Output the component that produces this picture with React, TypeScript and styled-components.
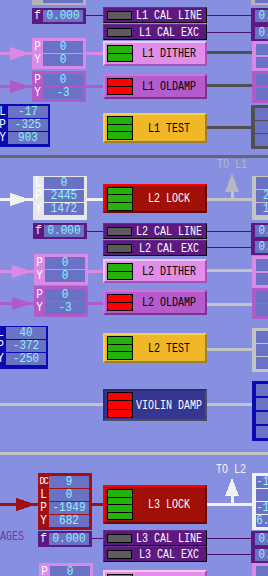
import React from "react";
import styled, { createGlobalStyle } from "styled-components";

const GlobalStyle = createGlobalStyle`
  html, body {
    margin: 0;
    padding: 0;
    background: #8790e0;
  }
  body {
    width: 268px;
    height: 576px;
    overflow: hidden;
    font-family: "Liberation Mono", "DejaVu Sans Mono", monospace;
  }
`;

const Screen = styled.div`
  width: 268px;
  height: 576px;
  overflow: hidden;
  background: #8790e0;
  display: flex;
  flex-direction: column;
`;

const Section = styled.section<{ $h: number }>`
  position: relative;
  height: ${(p) => p.$h}px;
  flex-shrink: 0;
  display: grid;
  grid-template-columns: 103px 104px 1fr;
`;

const Column = styled.div`
  position: relative;
  z-index: 1;
  display: flex;
  flex-direction: column;
  align-items: flex-start;
  min-width: 0;
`;

const Separator = styled.div<{ $c: string }>`
  height: 3px;
  flex-shrink: 0;
  background: ${(p) => p.$c};
`;

/* ---------- readback boxes ---------- */

const BoxFrame = styled.div<{ $mt: number; $ml: number; $w: number; $bg: string; $pad: string; $label: number; $gap: number }>`
  margin-top: ${(p) => p.$mt}px;
  margin-left: ${(p) => p.$ml}px;
  width: ${(p) => p.$w}px;
  flex-shrink: 0;
  box-sizing: border-box;
  padding: ${(p) => p.$pad};
  background: ${(p) => p.$bg};
  display: grid;
  grid-template-columns: ${(p) => p.$label}px 1fr;
  row-gap: ${(p) => p.$gap}px;
`;

const BoxLabel = styled.span<{ $c: string; $h: number; $tight?: boolean }>`
  height: ${(p) => p.$h}px;
  line-height: ${(p) => p.$h}px;
  color: ${(p) => p.$c};
  font-size: ${(p) => (p.$tight ? 9 : 11)}px;
  letter-spacing: ${(p) => (p.$tight ? -1.5 : 0)}px;
  text-align: center;
  transform: scaleY(1.15);
  white-space: nowrap;
`;

const Field = styled.div<{ $h: number }>`
  height: ${(p) => p.$h}px;
  line-height: ${(p) => p.$h}px;
  background: #6a72c6;
  color: #8ef4f4;
  font-size: 11px;
  text-align: center;
  overflow: hidden;
  white-space: nowrap;
  span {
    display: inline-block;
    transform: scaleY(1.15);
  }
`;

type Row = { label?: string; value?: string };

type BoxSpec = {
  mt: number;
  ml: number;
  w?: number;
  bg: string;
  rows: Row[];
  labelW?: number;
  rowH?: number;
  gap?: number;
  pad?: string;
  labelColor?: string;
};

function ReadBox({ mt, ml, w = 54, bg, rows, labelW = 11, rowH = 12, gap = 1, pad = "3px 3px 3px 0", labelColor = "#ffffff" }: BoxSpec) {
  return (
    <BoxFrame $mt={mt} $ml={ml} $w={w} $bg={bg} $pad={pad} $label={labelW} $gap={gap}>
      {rows.map((r, i) => (
        <React.Fragment key={i}>
          <BoxLabel $c={labelColor} $h={rowH} $tight={(r.label || "").length > 1}>
            {r.label}
          </BoxLabel>
          <Field $h={rowH}>
            <span>{r.value}</span>
          </Field>
        </React.Fragment>
      ))}
    </BoxFrame>
  );
}

/* ---------- buttons with lamps ---------- */

const BtnFrame = styled.div<{ $mt: number; $h: number; $bg: string; $hi: string; $lo: string; $fg: string; $bw: number }>`
  margin-top: ${(p) => p.$mt}px;
  width: 104px;
  height: ${(p) => p.$h}px;
  flex-shrink: 0;
  box-sizing: border-box;
  background: ${(p) => p.$bg};
  border-style: solid;
  border-width: ${(p) => p.$bw}px;
  border-color: ${(p) => `${p.$hi} ${p.$lo} ${p.$lo} ${p.$hi}`};
  color: ${(p) => p.$fg};
  display: flex;
  align-items: center;
  padding-left: ${(p) => 4 - p.$bw}px;
`;

const Lamp = styled.div<{ $w: number; $h: number }>`
  width: ${(p) => p.$w}px;
  height: ${(p) => p.$h}px;
  box-sizing: border-box;
  border: 1px solid #000;
  background: #000;
  display: flex;
  flex-direction: column;
  gap: 1px;
  flex-shrink: 0;
`;

const Segment = styled.div<{ $c: string }>`
  flex: 1;
  background: ${(p) => p.$c};
`;

const BtnText = styled.span`
  flex: 1;
  text-align: center;
  font-size: 10px;
  white-space: nowrap;
  transform: scaleY(1.3);
`;

type Look = { bg: string; hi: string; lo: string; fg: string; bw?: number };

const looks: Record<string, Look> = {
  cal: { bg: "#5c1a80", hi: "#6e2a92", lo: "#000000", fg: "#ffffff", bw: 1 },
  dither: { bg: "#e08ee9", hi: "#f6c6f8", lo: "#a452b6", fg: "#000000" },
  oldamp: { bg: "#b45ccb", hi: "#c878dc", lo: "#7c3290", fg: "#000000" },
  test: { bg: "#f0b828", hi: "#f8d04a", lo: "#98803a", fg: "#000000" },
  lock: { bg: "#a01008", hi: "#ff0000", lo: "#6a0804", fg: "#ffffff" },
  violin: { bg: "#363690", hi: "#2c2c78", lo: "#4c4c64", fg: "#ffffff" },
};

type BtnSpec = {
  mt: number;
  h: number;
  look: string;
  text: string;
  lamp: { w: number; h: number; c: string; n: number };
};

function Button({ mt, h, look, text, lamp }: BtnSpec) {
  const l = looks[look];
  return (
    <BtnFrame $mt={mt} $h={h} $bg={l.bg} $hi={l.hi} $lo={l.lo} $fg={l.fg} $bw={l.bw ?? 2}>
      <Lamp $w={lamp.w} $h={lamp.h}>
        {Array.from({ length: lamp.n }).map((_, i) => (
          <Segment key={i} $c={lamp.c} />
        ))}
      </Lamp>
      <BtnText>{text}</BtnText>
    </BtnFrame>
  );
}

/* ---------- connectors drawn over the canvas ---------- */

const Wire = styled.div<{ $x: number; $y: number; $w: number; $h: number; $c: string }>`
  position: absolute;
  left: ${(p) => p.$x}px;
  top: ${(p) => p.$y}px;
  width: ${(p) => p.$w}px;
  height: ${(p) => p.$h}px;
  background: ${(p) => p.$c};
`;

const Glyph = styled.svg<{ $x: number; $y: number }>`
  position: absolute;
  left: ${(p) => p.$x}px;
  top: ${(p) => p.$y}px;
  shape-rendering: crispEdges;
`;

const Caption = styled.span<{ $x: number; $y: number; $c: string }>`
  position: absolute;
  left: ${(p) => p.$x}px;
  top: ${(p) => p.$y}px;
  color: ${(p) => p.$c};
  font-size: 10px;
  line-height: 10px;
  white-space: nowrap;
  transform: scaleY(1.2);
`;

const StageRow = styled.div<{ $mt: number }>`
  margin-top: ${(p) => p.$mt}px;
  display: flex;
  align-items: flex-start;
`;

const StageNote = styled.span`
  width: 24px;
  display: flex;
  justify-content: flex-end;
  padding-top: 1px;
  color: #7434a4;
  font-size: 10px;
  line-height: 10px;
  white-space: nowrap;
  transform: scaleY(1.2);
`;

function RightArrow({ x, y, c }: { x: number; y: number; c: string }) {
  return (
    <Glyph $x={x} $y={y - 6} width={20} height={13} viewBox="0 0 20 13">
      <polygon points="0,0 20,6.5 0,13" fill={c} />
    </Glyph>
  );
}

function UpArrow({ x, y, c }: { x: number; y: number; c: string }) {
  return (
    <Glyph $x={x} $y={y} width={14} height={18} viewBox="0 0 14 18">
      <polygon points="7,0 14,18 0,18" fill={c} />
    </Glyph>
  );
}

type WireSpec = [number, number, number, number, string];

function Wires({ list }: { list: WireSpec[] }) {
  return (
    <>
      {list.map(([x, y, w, h, c], i) => (
        <Wire key={i} $x={x} $y={y} $w={w} $h={h} $c={c} />
      ))}
    </>
  );
}

/* ---------- data ---------- */

const PURPLE = "#5c1a80";
const LIGHT_VIOLET = "#d98ae6";
const VIOLET = "#b05cc8";
const BLUE = "#0a0ab2";
const DARK_RED = "#a01010";
const GRAY = "#c4c4c4";
const DARK_GRAY = "#505050";
const WHITE = "#f2f2f2";
const WIRE_PURPLE = "#4a1268";

const GREEN = "#22b20a";
const RED = "#ff0000";
const OFF = "#5c5c5c";

const calLamp = { w: 25, h: 9, c: OFF, n: 1 };
const twoGreen = { w: 26, h: 17, c: GREEN, n: 2 };
const twoRed = { w: 26, h: 17, c: RED, n: 2 };
const threeGreen = { w: 26, h: 24, c: GREEN, n: 3 };

const fPad = "2px 3px 2px 0";
const rPad = "3px 10px 3px 0";
const rfPad = "2px 10px 2px 0";
const pair = (p: string, y: string): Row[] => [
  { label: "P", value: p },
  { label: "Y", value: y },
];
const cal: Row[] = [{ value: "0.000" }, { value: "0.000" }];
const blank = (n: number): Row[] => Array.from({ length: n }, () => ({ value: "0" }));

// level 1 (section y 0..155)
const l1Left: BoxSpec[] = [
  { mt: -12, ml: 32, bg: "#b4b4b4", rows: [{ value: "" }], pad: "3px 3px 2px 0" },
  { mt: 3, ml: 32, bg: PURPLE, rows: [{ label: "f", value: "0.000" }], pad: fPad },
  { mt: 14, ml: 32, bg: LIGHT_VIOLET, rows: pair("0", "0") },
  { mt: 2, ml: 32, bg: VIOLET, rows: pair("0", "-3") },
  {
    mt: 2,
    ml: -3,
    w: 53,
    bg: BLUE,
    rows: [{ label: "L", value: "-17" }, { label: "P", value: "-325" }, { label: "Y", value: "903" }],
    pad: "2px 2px 3px 0",
  },
];
const l1Mid: BtnSpec[] = [
  { mt: 7, h: 16, look: "cal", text: "L1 CAL LINE", lamp: calLamp },
  { mt: 1, h: 16, look: "cal", text: "L1 CAL EXC", lamp: calLamp },
  { mt: 1, h: 25, look: "dither", text: "L1 DITHER", lamp: twoGreen },
  { mt: 8, h: 25, look: "oldamp", text: "L1 OLDAMP", lamp: twoRed },
  { mt: 14, h: 30, look: "test", text: "L1 TEST", lamp: threeGreen },
];
const l1Right: BoxSpec[] = [
  { mt: -12, ml: 44, bg: "#b4b4b4", rows: [{}], pad: "3px 10px 2px 0" },
  { mt: 3, ml: 44, bg: PURPLE, rows: cal, pad: rfPad, gap: 5 },
  { mt: 0, ml: 45, bg: LIGHT_VIOLET, rows: blank(2), rowH: 11, gap: 2, pad: rPad },
  { mt: 0, ml: 45, bg: VIOLET, rows: blank(2), gap: 2, pad: rPad },
  { mt: 2, ml: 44, bg: DARK_GRAY, rows: blank(3), pad: rPad },
];
const l1Wires: WireSpec[] = [
  [86, 15, 17, 1, WIRE_PURPLE],
  [206, 15, 46, 1, WIRE_PURPLE],
  [206, 32, 46, 1, WIRE_PURPLE],
  [0, 52, 32, 3, LIGHT_VIOLET],
  [86, 52, 17, 3, LIGHT_VIOLET],
  [207, 51, 45, 3, DARK_GRAY],
  [0, 85, 32, 3, VIOLET],
  [86, 85, 17, 3, VIOLET],
  [207, 84, 45, 3, DARK_GRAY],
  [207, 126, 45, 3, DARK_GRAY],
];

// level 2 (section y 158..452)
const l2Left: BoxSpec[] = [
  {
    mt: 18,
    ml: 33,
    bg: "#e8e8e8",
    rows: [{ label: "L", value: "0" }, { label: "P", value: "2445" }, { label: "Y", value: "1472" }],
    pad: "1px 3px 5px 0",
  },
  { mt: 3, ml: 33, bg: PURPLE, rows: [{ label: "f", value: "0.000" }], pad: fPad },
  { mt: 15, ml: 34, bg: LIGHT_VIOLET, rows: pair("0", "0") },
  { mt: 1, ml: 34, bg: VIOLET, rows: pair("0", "-3") },
  {
    mt: 9,
    ml: -5,
    w: 53,
    bg: BLUE,
    rows: [{ label: "L", value: "40" }, { label: "P", value: "-372" }, { label: "Y", value: "-250" }],
    pad: "1px 2px 4px 0",
  },
];
const l2Mid: BtnSpec[] = [
  { mt: 26, h: 29, look: "lock", text: "L2 LOCK", lamp: threeGreen },
  { mt: 10, h: 16, look: "cal", text: "L2 CAL LINE", lamp: calLamp },
  { mt: 1, h: 16, look: "cal", text: "L2 CAL EXC", lamp: calLamp },
  { mt: 3, h: 24, look: "dither", text: "L2 DITHER", lamp: twoGreen },
  { mt: 7, h: 25, look: "oldamp", text: "L2 OLDAMP", lamp: twoRed },
  { mt: 18, h: 30, look: "test", text: "L2 TEST", lamp: threeGreen },
  { mt: 26, h: 32, look: "violin", text: "VIOLIN DAMP", lamp: { w: 26, h: 26, c: RED, n: 3 } },
];
const l2Right: BoxSpec[] = [
  { mt: 18, ml: 45, bg: GRAY, rows: [{ value: "0" }, { value: "2446" }, { value: "1473" }], pad: "1px 10px 5px 0" },
  { mt: 3, ml: 44, bg: PURPLE, rows: cal, pad: rfPad, gap: 4 },
  { mt: 1, ml: 45, bg: LIGHT_VIOLET, rows: blank(2), gap: 2, pad: rPad },
  { mt: 0, ml: 45, bg: VIOLET, rows: blank(2), pad: rPad },
  { mt: 9, ml: 45, bg: GRAY, rows: blank(3), gap: 1, pad: rPad },
  { mt: 9, ml: 45, bg: BLUE, rows: blank(4), gap: 2, pad: rPad },
];
const l2Wires: WireSpec[] = [
  [0, 40, 33, 3, WHITE],
  [87, 40, 16, 3, WHITE],
  [207, 40, 45, 3, GRAY],
  [231, 32, 3, 9, GRAY],
  [87, 73, 16, 1, WIRE_PURPLE],
  [206, 73, 46, 1, WIRE_PURPLE],
  [206, 89, 46, 1, WIRE_PURPLE],
  [0, 112, 34, 3, LIGHT_VIOLET],
  [88, 112, 15, 3, LIGHT_VIOLET],
  [207, 111, 45, 3, GRAY],
  [0, 144, 34, 3, VIOLET],
  [88, 144, 15, 3, VIOLET],
  [207, 145, 45, 3, GRAY],
  [207, 190, 45, 3, GRAY],
  [0, 245, 103, 3, GRAY],
  [207, 245, 45, 3, GRAY],
];

// level 3 (section y 455..)
const l3Top: BoxSpec = {
  mt: 18,
  ml: 38,
  bg: DARK_RED,
  rows: [
    { label: "DC", value: "9" },
    { label: "L", value: "0" },
    { label: "P", value: "-1949" },
    { label: "Y", value: "682" },
  ],
};
const l3Mid: BtnSpec[] = [
  { mt: 30, h: 39, look: "lock", text: "L3 LOCK", lamp: { w: 26, h: 31, c: GREEN, n: 4 } },
  { mt: 6, h: 16, look: "cal", text: "L3 CAL LINE", lamp: calLamp },
  { mt: 0, h: 16, look: "cal", text: "L3 CAL EXC", lamp: calLamp },
  { mt: 8, h: 25, look: "dither", text: "L3 DITHER", lamp: twoGreen },
];
const l3Right: BoxSpec[] = [
  {
    mt: 18,
    ml: 45,
    bg: WHITE,
    rows: [{ value: "-1.025" }, { value: "0" }, { value: "-1.949" }, { value: "6.8213" }],
    pad: rPad,
  },
  { mt: 1, ml: 44, bg: PURPLE, rows: cal, pad: rfPad, gap: 4 },
  { mt: 0, ml: 45, bg: LIGHT_VIOLET, rows: blank(2), pad: rPad },
];
const l3Wires: WireSpec[] = [
  [0, 48, 38, 3, DARK_RED],
  [92, 48, 11, 3, DARK_RED],
  [207, 48, 45, 3, WHITE],
  [231, 39, 3, 10, WHITE],
  [92, 83, 11, 1, WIRE_PURPLE],
  [206, 83, 46, 1, WIRE_PURPLE],
  [206, 99, 46, 1, WIRE_PURPLE],
];

export default function App() {
  return (
    <>
      <GlobalStyle />
      <Screen>
        <Section $h={155}>
          <Wires list={l1Wires} />
          <RightArrow x={10} y={53} c={LIGHT_VIOLET} />
          <RightArrow x={10} y={86} c={VIOLET} />
          <Column>
            {l1Left.map((b, i) => (
              <ReadBox key={i} {...b} />
            ))}
          </Column>
          <Column>
            {l1Mid.map((b, i) => (
              <Button key={i} {...b} />
            ))}
          </Column>
          <Column>
            {l1Right.map((b, i) => (
              <ReadBox key={i} labelW={4} {...b} />
            ))}
          </Column>
        </Section>
        <Separator $c="#66666e" />
        <Section $h={294}>
          <Wires list={l2Wires} />
          <RightArrow x={10} y={41} c={WHITE} />
          <RightArrow x={12} y={113} c={LIGHT_VIOLET} />
          <RightArrow x={12} y={145} c={VIOLET} />
          <UpArrow x={225} y={16} c="#b8b8c0" />
          <Caption $x={217} $y={3} $c="#b8b8c0">TO L1</Caption>
          <Column>
            {l2Left.map((b, i) => (
              <ReadBox key={i} {...b} />
            ))}
          </Column>
          <Column>
            {l2Mid.map((b, i) => (
              <Button key={i} {...b} />
            ))}
          </Column>
          <Column>
            {l2Right.map((b, i) => (
              <ReadBox key={i} labelW={4} {...b} />
            ))}
          </Column>
        </Section>
        <Separator $c={GRAY} />
        <Section $h={300}>
          <Wires list={l3Wires} />
          <RightArrow x={16} y={49} c={DARK_RED} />
          <UpArrow x={225} y={23} c={WHITE} />
          <Caption $x={216} $y={11} $c={WHITE}>TO L2</Caption>
          <Column>
            <ReadBox {...l3Top} />
            <StageRow $mt={1}>
              <StageNote>STAGES</StageNote>
              <ReadBox mt={0} ml={14} bg={PURPLE} rows={[{ label: "f", value: "0.000" }]} pad={fPad} />
            </StageRow>
            <ReadBox mt={16} ml={39} bg={LIGHT_VIOLET} rows={pair("0", "0")} />
          </Column>
          <Column>
            {l3Mid.map((b, i) => (
              <Button key={i} {...b} />
            ))}
          </Column>
          <Column>
            {l3Right.map((b, i) => (
              <ReadBox key={i} labelW={4} {...b} />
            ))}
          </Column>
        </Section>
      </Screen>
    </>
  );
}
